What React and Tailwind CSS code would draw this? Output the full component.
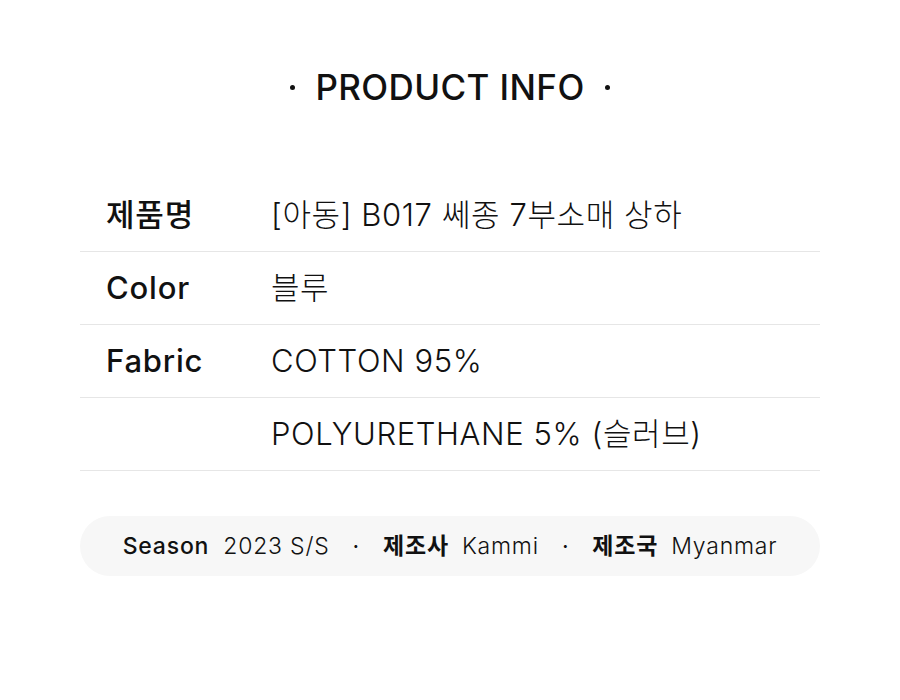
const rows = [
  { label: '제품명', value: '[아동] B017 쎄종 7부소매 상하' },
  { label: 'Color', value: '블루' },
  { label: 'Fabric', value: 'COTTON 95%' },
  { label: '', value: 'POLYURETHANE 5% (슬러브)' },
]

const fontStack = { fontFamily: 'Inter, "Noto Sans CJK KR", sans-serif' }

function App() {
  return (
    <div className="min-h-[700px] w-[900px] bg-white text-[#111]" style={fontStack}>
      <div className="flex items-center justify-center gap-[20px] pt-[64px]">
        <span className="h-[5px] w-[5px] rounded-full bg-[#111]" />
        <h1 className="text-[35px] font-medium leading-[46px] tracking-[0.4px]">PRODUCT INFO</h1>
        <span className="h-[5px] w-[5px] rounded-full bg-[#111]" />
      </div>

      <div className="mx-[80px] mt-[69px]">
        {rows.map((row, index) => (
          <div className="flex h-[73px] items-center border-b border-[#e6e6e6]" key={index}>
            <div className="w-[191px] pl-[26px] text-[31px] font-medium tracking-[0.8px]">
              {row.label}
            </div>
            <div className="text-[31px] font-light tracking-[0.6px]">{row.value}</div>
          </div>
        ))}
      </div>

      <div className="mx-[80px] mt-[45px] flex h-[60px] items-center justify-center gap-[23px] rounded-full bg-[#f7f7f7] text-[23px] tracking-[0.8px]">
        <span>
          <span className="font-medium">Season</span>
          <span className="ml-[14px] font-light">2023 S/S</span>
        </span>
        <span>·</span>
        <span>
          <span className="font-semibold">제조사</span>
          <span className="ml-[13px] font-light">Kammi</span>
        </span>
        <span>·</span>
        <span>
          <span className="font-semibold">제조국</span>
          <span className="ml-[13px] font-light">Myanmar</span>
        </span>
      </div>
    </div>
  )
}

export default App
